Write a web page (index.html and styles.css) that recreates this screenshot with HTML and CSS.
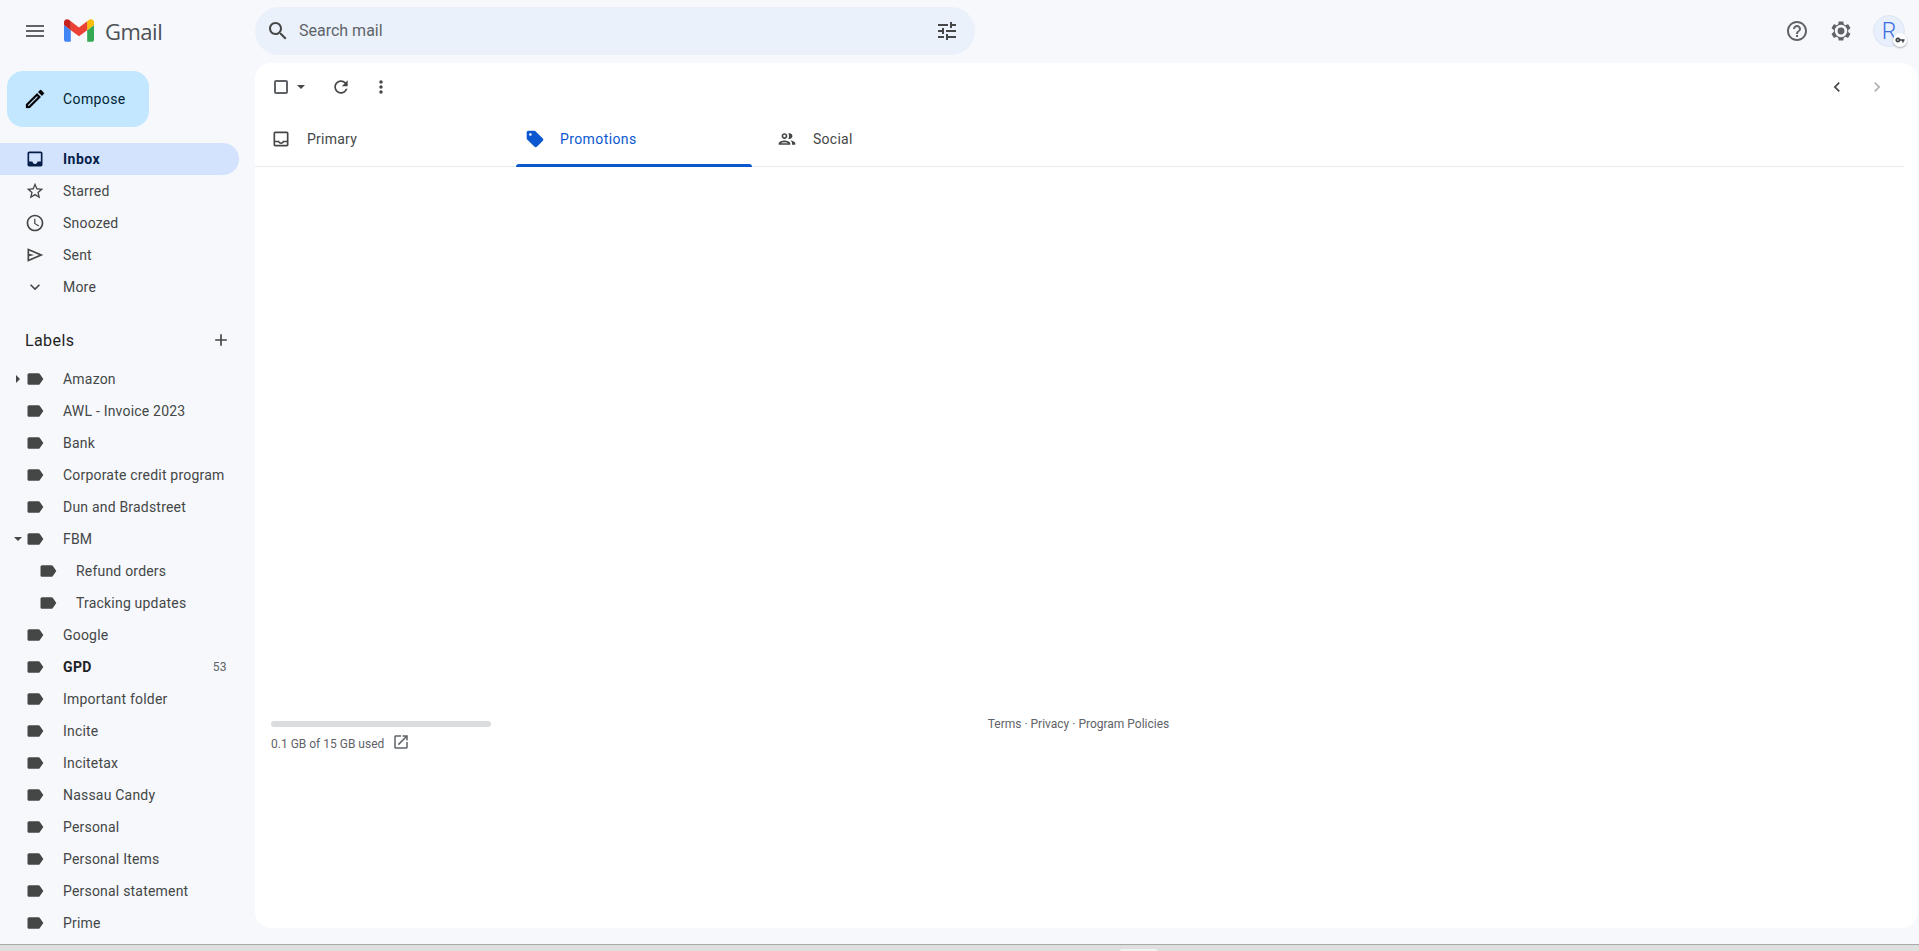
FILE: index.html
```html
<!DOCTYPE html>
<html lang="en">
<head>
    <meta charset="UTF-8">
    <title>Promotions - Gmail</title>
    <link rel="stylesheet" href="styles.css">
</head>
<body>
    <svg class="defs" width="0" height="0">
        <symbol id="i-label" viewBox="0 0 24 24"><path d="M17.63 5.84C17.27 5.33 16.67 5 16 5L5 5.01C3.9 5.01 3 5.9 3 7v10c0 1.1.9 1.99 2 1.99L16 19c.67 0 1.27-.33 1.63-.84L22 12l-4.37-6.16z"/></symbol>
    </svg>
    <div class="app">
        <aside class="sidebar">
            <div class="brand">
                <svg class="icon menu-icon" viewBox="0 0 24 24"><path d="M3 18h18v-2H3v2zm0-5h18v-2H3v2zm0-7v2h18V6H3z"/></svg>
                <svg class="logo" viewBox="52 42 88 66"><path fill="#4285f4" d="M58 108h14V74L52 59v43c0 3.32 2.69 6 6 6"/><path fill="#34a853" d="M120 108h14c3.32 0 6-2.69 6-6V59l-20 15"/><path fill="#fbbc04" d="M120 48v26l20-15v-8c0-7.42-8.47-11.65-14.4-7.2"/><path fill="#ea4335" d="M72 74V48l24 18 24-18v26L96 92"/><path fill="#c5221f" d="M52 51v8l20 15V48l-5.6-4.2c-5.94-4.45-14.4-.22-14.4 7.2"/></svg>
                <span class="brand-name">Gmail</span>
            </div>
            <div class="compose">
                <svg class="compose-icon" viewBox="0 0 24 24"><path d="M14.06 9.02l.92.92L5.92 19H5v-.92l9.06-9.06M17.66 3c-.25 0-.51.1-.7.29l-1.83 1.83 3.75 3.75 1.83-1.83c.39-.39.39-1.02 0-1.41l-2.34-2.34c-.2-.2-.45-.29-.71-.29zm-3.6 3.19L3 17.25V21h3.75L17.81 9.94l-3.75-3.75z"/></svg>
                <span>Compose</span>
            </div>
            <nav class="nav">
                <div class="row is-active">
                    <svg class="icon" viewBox="0 0 24 24"><path fill-rule="evenodd" d="M5 3h14c1.1 0 2 .9 2 2v14c0 1.1-.9 2-2 2H5c-1.1 0-2-.9-2-2V5c0-1.1.9-2 2-2zm0 12h4c0 1.66 1.34 3 3 3s3-1.34 3-3h4V5H5z"/></svg>
                    <span class="row-text">Inbox</span>
                </div>
                <div class="row">
                    <svg class="icon" viewBox="0 0 24 24"><path d="M22 9.24l-7.19-.62L12 2 9.19 8.63 2 9.24l5.46 4.73L5.82 21 12 17.27 18.18 21l-1.63-7.03L22 9.24zM12 15.4l-3.76 2.27 1-4.28-3.32-2.88 4.38-.38L12 6.1l1.71 4.04 4.38.38-3.32 2.88 1 4.28L12 15.4z"/></svg>
                    <span class="row-text">Starred</span>
                </div>
                <div class="row">
                    <svg class="icon" viewBox="0 0 24 24"><path d="M11.99 2C6.47 2 2 6.48 2 12s4.47 10 9.99 10C17.52 22 22 17.52 22 12S17.52 2 11.99 2zM12 20c-4.42 0-8-3.58-8-8s3.58-8 8-8 8 3.58 8 8-3.58 8-8 8zm.5-13H11v6l5.25 3.15.75-1.23-4.5-2.67z"/></svg>
                    <span class="row-text">Snoozed</span>
                </div>
                <div class="row">
                    <svg class="icon" viewBox="0 0 24 24"><path d="M3 20V4l19 8-19 8zm2-3 11.85-5L5 7v3.5l6 1.5-6 1.5V17z"/></svg>
                    <span class="row-text">Sent</span>
                </div>
                <div class="row">
                    <svg class="icon" viewBox="0 0 24 24"><path d="M16.59 8.59L12 13.17 7.41 8.59 6 10l6 6 6-6z"/></svg>
                    <span class="row-text">More</span>
                </div>
            </nav>
            <div class="labels-head">
                <span>Labels</span>
                <svg class="icon" viewBox="0 0 24 24"><path d="M19 13h-6v6h-2v-6H5v-2h6V5h2v6h6v2z"/></svg>
            </div>
            <div class="labels">
                <div class="row"><i class="caret caret-right"></i><svg class="icon"><use href="#i-label"/></svg><span class="row-text">Amazon</span></div>
                <div class="row"><svg class="icon"><use href="#i-label"/></svg><span class="row-text">AWL - Invoice 2023</span></div>
                <div class="row"><svg class="icon"><use href="#i-label"/></svg><span class="row-text">Bank</span></div>
                <div class="row"><svg class="icon"><use href="#i-label"/></svg><span class="row-text">Corporate credit program</span></div>
                <div class="row"><svg class="icon"><use href="#i-label"/></svg><span class="row-text">Dun and Bradstreet</span></div>
                <div class="row"><i class="caret caret-down"></i><svg class="icon"><use href="#i-label"/></svg><span class="row-text">FBM</span></div>
                <div class="row is-child"><svg class="icon"><use href="#i-label"/></svg><span class="row-text">Refund orders</span></div>
                <div class="row is-child"><svg class="icon"><use href="#i-label"/></svg><span class="row-text">Tracking updates</span></div>
                <div class="row"><svg class="icon"><use href="#i-label"/></svg><span class="row-text">Google</span></div>
                <div class="row is-unread"><svg class="icon"><use href="#i-label"/></svg><span class="row-text">GPD</span><span class="count">53</span></div>
                <div class="row"><svg class="icon"><use href="#i-label"/></svg><span class="row-text">Important folder</span></div>
                <div class="row"><svg class="icon"><use href="#i-label"/></svg><span class="row-text">Incite</span></div>
                <div class="row"><svg class="icon"><use href="#i-label"/></svg><span class="row-text">Incitetax</span></div>
                <div class="row"><svg class="icon"><use href="#i-label"/></svg><span class="row-text">Nassau Candy</span></div>
                <div class="row"><svg class="icon"><use href="#i-label"/></svg><span class="row-text">Personal</span></div>
                <div class="row"><svg class="icon"><use href="#i-label"/></svg><span class="row-text">Personal Items</span></div>
                <div class="row"><svg class="icon"><use href="#i-label"/></svg><span class="row-text">Personal statement</span></div>
                <div class="row"><svg class="icon"><use href="#i-label"/></svg><span class="row-text">Prime</span></div>
            </div>
        </aside>
        <div class="content">
            <header class="topbar">
                <div class="search">
                    <svg class="icon search-icon" viewBox="0 0 24 24"><path d="M15.5 14h-.79l-.28-.27C15.41 12.59 16 11.11 16 9.5 16 5.91 13.09 3 9.5 3S3 5.91 3 9.5 5.91 16 9.5 16c1.61 0 3.09-.59 4.23-1.57l.27.28v.79l5 4.99L20.49 19l-4.99-5zm-6 0C7.01 14 5 11.99 5 9.5S7.01 5 9.5 5 14 7.01 14 9.5 11.99 14 9.5 14z"/></svg>
                    <span class="search-text">Search mail</span>
                    <svg class="icon tune-icon" viewBox="0 0 24 24"><path d="M3 17v2h6v-2H3zM3 5v2h10V5H3zm10 16v-2h8v-2h-8v-2h-2v6h2zM7 9v2H3v2h4v2h2V9H7zm14 4v-2H11v2h10zm-6-4h2V7h4V5h-4V3h-2v6z"/></svg>
                </div>
                <div class="top-actions">
                    <svg class="icon action-icon" viewBox="0 0 24 24"><path d="M11 18h2v-2h-2v2zm1-16C6.48 2 2 6.48 2 12s4.48 10 10 10 10-4.48 10-10S17.52 2 12 2zm0 18c-4.41 0-8-3.59-8-8s3.59-8 8-8 8 3.59 8 8-3.59 8-8 8zm0-14c-2.21 0-4 1.79-4 4h2c0-1.1.9-2 2-2s2 .9 2 2c0 2-3 1.75-3 5h2c0-2.25 3-2.5 3-5 0-2.21-1.79-4-4-4z"/></svg>
                    <svg class="icon action-icon" viewBox="0 0 24 24"><path d="M19.14 12.94c.04-.3.06-.61.06-.94 0-.32-.02-.64-.07-.94l2.03-1.58c.18-.14.23-.41.12-.61l-1.92-3.32c-.12-.22-.37-.29-.59-.22l-2.39.96c-.5-.38-1.03-.7-1.62-.94l-.36-2.54c-.04-.24-.24-.41-.48-.41h-3.84c-.24 0-.43.17-.47.41l-.36 2.54c-.59.24-1.13.57-1.62.94l-2.39-.96c-.22-.08-.47 0-.59.22L2.74 8.87c-.12.21-.08.47.12.61l2.03 1.58c-.05.3-.09.63-.09.94s.02.64.07.94l-2.03 1.58c-.18.14-.23.41-.12.61l1.92 3.32c.12.22.37.29.59.22l2.39-.96c.5.38 1.03.7 1.62.94l.36 2.54c.05.24.24.41.48.41h3.84c.24 0 .44-.17.47-.41l.36-2.54c.59-.24 1.13-.56 1.62-.94l2.39.96c.22.08.47 0 .59-.22l1.92-3.32c.12-.22.07-.47-.12-.61l-2.01-1.58z"/><circle cx="12" cy="12" r="6.2" fill="#f6f8fc"/><circle cx="12" cy="12" r="3.4"/></svg>
                    <div class="avatar">
                        <span>R</span>
                        <div class="key-badge">
                            <svg viewBox="0 0 24 24"><path d="M12.65 10C11.83 7.67 9.61 6 7 6c-3.31 0-6 2.69-6 6s2.69 6 6 6c2.61 0 4.83-1.67 5.65-4H17v4h4v-4h2v-4H12.65zM7 14c-1.1 0-2-.9-2-2s.9-2 2-2 2 .9 2 2-.9 2-2 2z"/></svg>
                        </div>
                    </div>
                </div>
            </header>
            <main class="card">
                <div class="toolbar">
                    <div class="toolbar-left">
                        <div class="checkbox"></div>
                        <i class="caret caret-down select-caret"></i>
                        <svg class="icon refresh-icon" viewBox="0 0 24 24"><path d="M17.65 6.35C16.2 4.9 14.21 4 12 4c-4.42 0-7.99 3.58-7.99 8s3.57 8 7.99 8c3.73 0 6.84-2.55 7.73-6h-2.08c-.82 2.33-3.04 4-5.65 4-3.31 0-6-2.69-6-6s2.69-6 6-6c1.66 0 3.14.69 4.22 1.78L13 11h7V4l-2.35 2.35z"/></svg>
                        <svg class="icon more-icon" viewBox="0 0 24 24"><path d="M12 8c1.1 0 2-.9 2-2s-.9-2-2-2-2 .9-2 2 .9 2 2 2zm0 2c-1.1 0-2 .9-2 2s.9 2 2 2 2-.9 2-2-.9-2-2-2zm0 6c-1.1 0-2 .9-2 2s.9 2 2 2 2-.9 2-2-.9-2-2-2z"/></svg>
                    </div>
                    <div class="pager">
                        <svg class="icon" viewBox="0 0 24 24"><path d="M15.41 7.41L14 6l-6 6 6 6 1.41-1.41L10.83 12z"/></svg>
                        <svg class="icon is-disabled" viewBox="0 0 24 24"><path d="M10 6L8.59 7.41 13.17 12l-4.58 4.59L10 18l6-6z"/></svg>
                    </div>
                </div>
                <div class="tabs">
                    <div class="tab tab-primary">
                        <svg class="icon" viewBox="0 0 24 24"><path d="M19 3H5c-1.1 0-2 .9-2 2v14c0 1.1.9 2 2 2h14c1.1 0 2-.9 2-2V5c0-1.1-.9-2-2-2zm0 16H5v-3h3.56c.69 1.19 1.97 2 3.45 2s2.75-.81 3.45-2H19v3zm0-5h-4.99c0 1.1-.9 2-2 2s-2-.9-2-2H5V5h14v9z"/></svg>
                        <span>Primary</span>
                    </div>
                    <div class="tab tab-promo is-active">
                        <svg class="icon" viewBox="0 0 24 24"><path d="M21.41 11.41l-8.83-8.83C12.21 2.21 11.7 2 11.17 2H4c-1.1 0-2 .9-2 2v7.17c0 .53.21 1.04.59 1.41l8.83 8.83c.78.78 2.05.78 2.83 0l7.17-7.17c.78-.79.78-2.05-.01-2.83zM6.5 8C5.67 8 5 7.33 5 6.5S5.67 5 6.5 5 8 5.67 8 6.5 7.33 8 6.5 8z"/></svg>
                        <span>Promotions</span>
                    </div>
                    <div class="tab tab-social">
                        <svg class="icon" viewBox="0 0 24 24"><path d="M9 13.75c-2.34 0-7 1.17-7 3.5V19h14v-1.75c0-2.33-4.66-3.5-7-3.5zM4.34 17c.84-.58 2.87-1.25 4.66-1.25s3.82.67 4.66 1.25H4.34zM9 12c1.93 0 3.5-1.57 3.5-3.5S10.93 5 9 5 5.5 6.57 5.5 8.5 7.07 12 9 12zm0-5c.83 0 1.5.67 1.5 1.5S9.83 10 9 10s-1.5-.67-1.5-1.5S8.17 7 9 7zm7.04 6.81c1.16.84 1.96 1.96 1.96 3.44V19h4v-1.75c0-2.02-3.5-3.17-5.96-3.44zM15 12c1.93 0 3.5-1.57 3.5-3.5S16.93 5 15 5c-.54 0-1.04.13-1.5.35.63.89 1 1.98 1 3.15s-.37 2.26-1 3.15c.46.22.96.35 1.5.35z"/></svg>
                        <span>Social</span>
                    </div>
                </div>
                <div class="empty"></div>
                <footer class="card-foot">
                    <div class="storage">
                        <div class="storage-bar"></div>
                        <div class="storage-text">
                            <span>0.1 GB of 15 GB used</span>
                            <svg class="icon open-icon" viewBox="0 0 24 24"><path d="M19 19H5V5h7V3H5c-1.11 0-2 .9-2 2v14c0 1.1.89 2 2 2h14c1.1 0 2-.9 2-2v-7h-2v7zM14 3v2h3.59l-9.83 9.83 1.41 1.41L19 6.41V10h2V3h-7z"/></svg>
                        </div>
                    </div>
                    <div class="foot-links">Terms · Privacy · Program Policies</div>
                </footer>
            </main>
        </div>
    </div>
    <div class="taskbar"><div class="taskbar-tab"></div></div>
</body>
</html>
```

FILE: styles.css
```css
* {
    box-sizing: border-box;
}

html,
body {
    height: 100%;
}

body {
    margin: 0;
    background: #f6f8fc;
    color: #444746;
    font-family: Roboto, "Liberation Sans", sans-serif;
    font-size: 14px;
    overflow: hidden;
    display: flex;
    flex-direction: column;
}

.defs {
    position: absolute;
}

.icon {
    width: 20px;
    height: 20px;
    fill: #444746;
    flex: none;
}

.app {
    flex: 1;
    display: flex;
    min-height: 0;
}

.taskbar {
    height: 7px;
    flex: none;
    background: #dfdfdf;
    border-top: 1px solid #a9a9a9;
    padding: 4px 0 0 1120px;
    overflow: hidden;
}

.taskbar-tab {
    width: 37px;
    height: 6px;
    background: #f2f2f2;
    border-radius: 2px 2px 0 0;
}

/* sidebar */

.sidebar {
    width: 255px;
    flex: none;
    overflow: hidden;
}

.brand {
    height: 63px;
    display: flex;
    align-items: center;
    padding: 0 0 2px 23px;
}

.menu-icon {
    width: 24px;
    height: 24px;
    fill: #5f6368;
}

.logo {
    width: 30px;
    height: 23px;
    margin-left: 17px;
}

.brand-name {
    margin-left: 11px;
    font-family: "Open Sans", sans-serif;
    font-size: 22px;
    color: #4d5156;
    letter-spacing: -.5px;
}

.compose {
    width: 142px;
    height: 56px;
    margin: 8px 0 16px 7px;
    padding-left: 16px;
    border-radius: 16px;
    background: #c2e7ff;
    color: #001d35;
    letter-spacing: .4px;
    display: flex;
    align-items: center;
}

.compose span {
    margin-left: 16px;
}

.compose-icon {
    width: 24px;
    height: 24px;
    fill: #000;
    stroke: #000;
    stroke-width: .25;
}

.row {
    height: 32px;
    display: flex;
    align-items: center;
    padding: 0 12px 0 25px;
    position: relative;
    letter-spacing: .2px;
    white-space: nowrap;
}

.row .icon {
    margin-right: 18px;
}

.row.is-active {
    width: 239px;
    border-radius: 0 16px 16px 0;
    background: #d3e3fd;
    color: #041e49;
    font-weight: 700;
    letter-spacing: .5px;
}

.row.is-active .icon {
    fill: #041e49;
}

.row.is-child {
    padding-left: 38px;
}

.row.is-unread {
    color: #202124;
    font-weight: 700;
    letter-spacing: .4px;
}

.count {
    margin-left: auto;
    margin-right: 16px;
    font-size: 12px;
    font-weight: 400;
    color: #5f6368;
}

.caret {
    width: 0;
    height: 0;
    display: block;
    border-style: solid;
}

.row .caret {
    position: absolute;
    top: 12px;
}

.caret-right {
    left: 16px;
    border-width: 4px 0 4px 4px;
    border-color: transparent transparent transparent #444746;
}

.caret-down {
    left: 14px;
    border-width: 4px 4px 0;
    border-color: #444746 transparent transparent;
}

.row .caret-down {
    top: 14px;
}

.labels-head {
    height: 32px;
    margin: 21px 0 7px;
    padding: 0 24px 0 25px;
    display: flex;
    align-items: center;
    justify-content: space-between;
    font-size: 16px;
    letter-spacing: .4px;
    color: #1f1f1f;
}

/* top bar */

.content {
    flex: 1;
    min-width: 0;
    display: flex;
    flex-direction: column;
    padding-bottom: 16px;
}

.topbar {
    height: 63px;
    flex: none;
    display: flex;
    align-items: flex-start;
    justify-content: space-between;
    padding: 7px 14px 0 0;
}

.search {
    width: 720px;
    height: 48px;
    border-radius: 24px;
    background: #eaf1fb;
    display: flex;
    align-items: center;
    padding: 0 16px 0 11px;
}

.search-icon {
    width: 24px;
    height: 24px;
}

.search-text {
    margin: 0 0 2px 9px;
    font-size: 16px;
    color: #5f6368;
}

.tune-icon {
    width: 24px;
    height: 24px;
    margin-left: auto;
}

.top-actions {
    height: 48px;
    display: flex;
    align-items: center;
    gap: 20px;
}

.action-icon {
    width: 24px;
    height: 24px;
    fill: #5f6368;
}

.avatar {
    width: 32px;
    height: 32px;
    border-radius: 50%;
    background: #e8f0fe;
    border: 1px solid #dfe6f3;
    color: #3b6fe0;
    font-size: 23px;
    font-weight: 300;
    display: flex;
    align-items: center;
    justify-content: center;
    position: relative;
}

.key-badge {
    position: absolute;
    right: -3px;
    bottom: -1px;
    width: 14px;
    height: 14px;
    border-radius: 50%;
    background: #fff;
    box-shadow: 0 1px 2px rgba(60, 64, 67, .4);
    display: flex;
    align-items: center;
    justify-content: center;
}

.key-badge svg {
    width: 10px;
    height: 10px;
    fill: #3c4043;
}

/* main card */

.card {
    flex: 1;
    margin-right: 1px;
    background: #fff;
    border-radius: 16px;
    display: flex;
    flex-direction: column;
    min-height: 0;
}

.toolbar {
    height: 40px;
    margin-top: 4px;
    flex: none;
    display: flex;
    align-items: center;
    justify-content: space-between;
    padding: 0 31px 0 19px;
}

.toolbar-left {
    display: flex;
    align-items: center;
}

.checkbox {
    width: 14px;
    height: 14px;
    border: 2px solid #5f6368;
    border-radius: 2px;
}

.select-caret {
    margin-left: 9px;
}

.refresh-icon {
    margin-left: 26px;
}

.more-icon {
    margin-left: 20px;
}

.pager {
    display: flex;
    gap: 20px;
}

.pager .is-disabled {
    fill: #b0b3b6;
}

.tabs {
    height: 56px;
    margin: 4px 14px 0 0;
    flex: none;
    display: flex;
    border-bottom: 1px solid #e8eaed;
}

.tab {
    display: flex;
    align-items: center;
    letter-spacing: .25px;
    position: relative;
}

.tab-primary {
    width: 261px;
    padding-left: 16px;
}

.tab-primary .icon {
    margin-right: 16px;
}

.tab-promo {
    width: 236px;
    padding-left: 9px;
}

.tab-promo .icon {
    margin-right: 15px;
}

.tab-social {
    padding-left: 25px;
}

.tab-social .icon {
    margin-right: 16px;
}

.tab.is-active {
    color: #0b57d0;
    letter-spacing: .4px;
}

.tab.is-active .icon {
    fill: #0b57d0;
}

.tab.is-active::after {
    content: "";
    position: absolute;
    left: 0;
    right: 0;
    bottom: -1px;
    height: 3px;
    background: #0b57d0;
    border-radius: 3px 3px 0 0;
}

.empty {
    height: 549px;
    flex: none;
}

.card-foot {
    margin-right: 14px;
    padding: 0 18px 0 16px;
    display: grid;
    grid-template-columns: 1fr auto 1fr;
    font-size: 12px;
    line-height: 16px;
    color: #5f6368;
}

.storage {
    padding-top: 5px;
}

.storage-bar {
    width: 220px;
    height: 6px;
    border-radius: 3px;
    background: #dadce0;
}

.storage-text {
    margin-top: 9px;
    display: flex;
    align-items: center;
    gap: 8px;
}

.open-icon {
    width: 18px;
    height: 18px;
    fill: #5f6368;
    margin-top: -4px;
}
```
